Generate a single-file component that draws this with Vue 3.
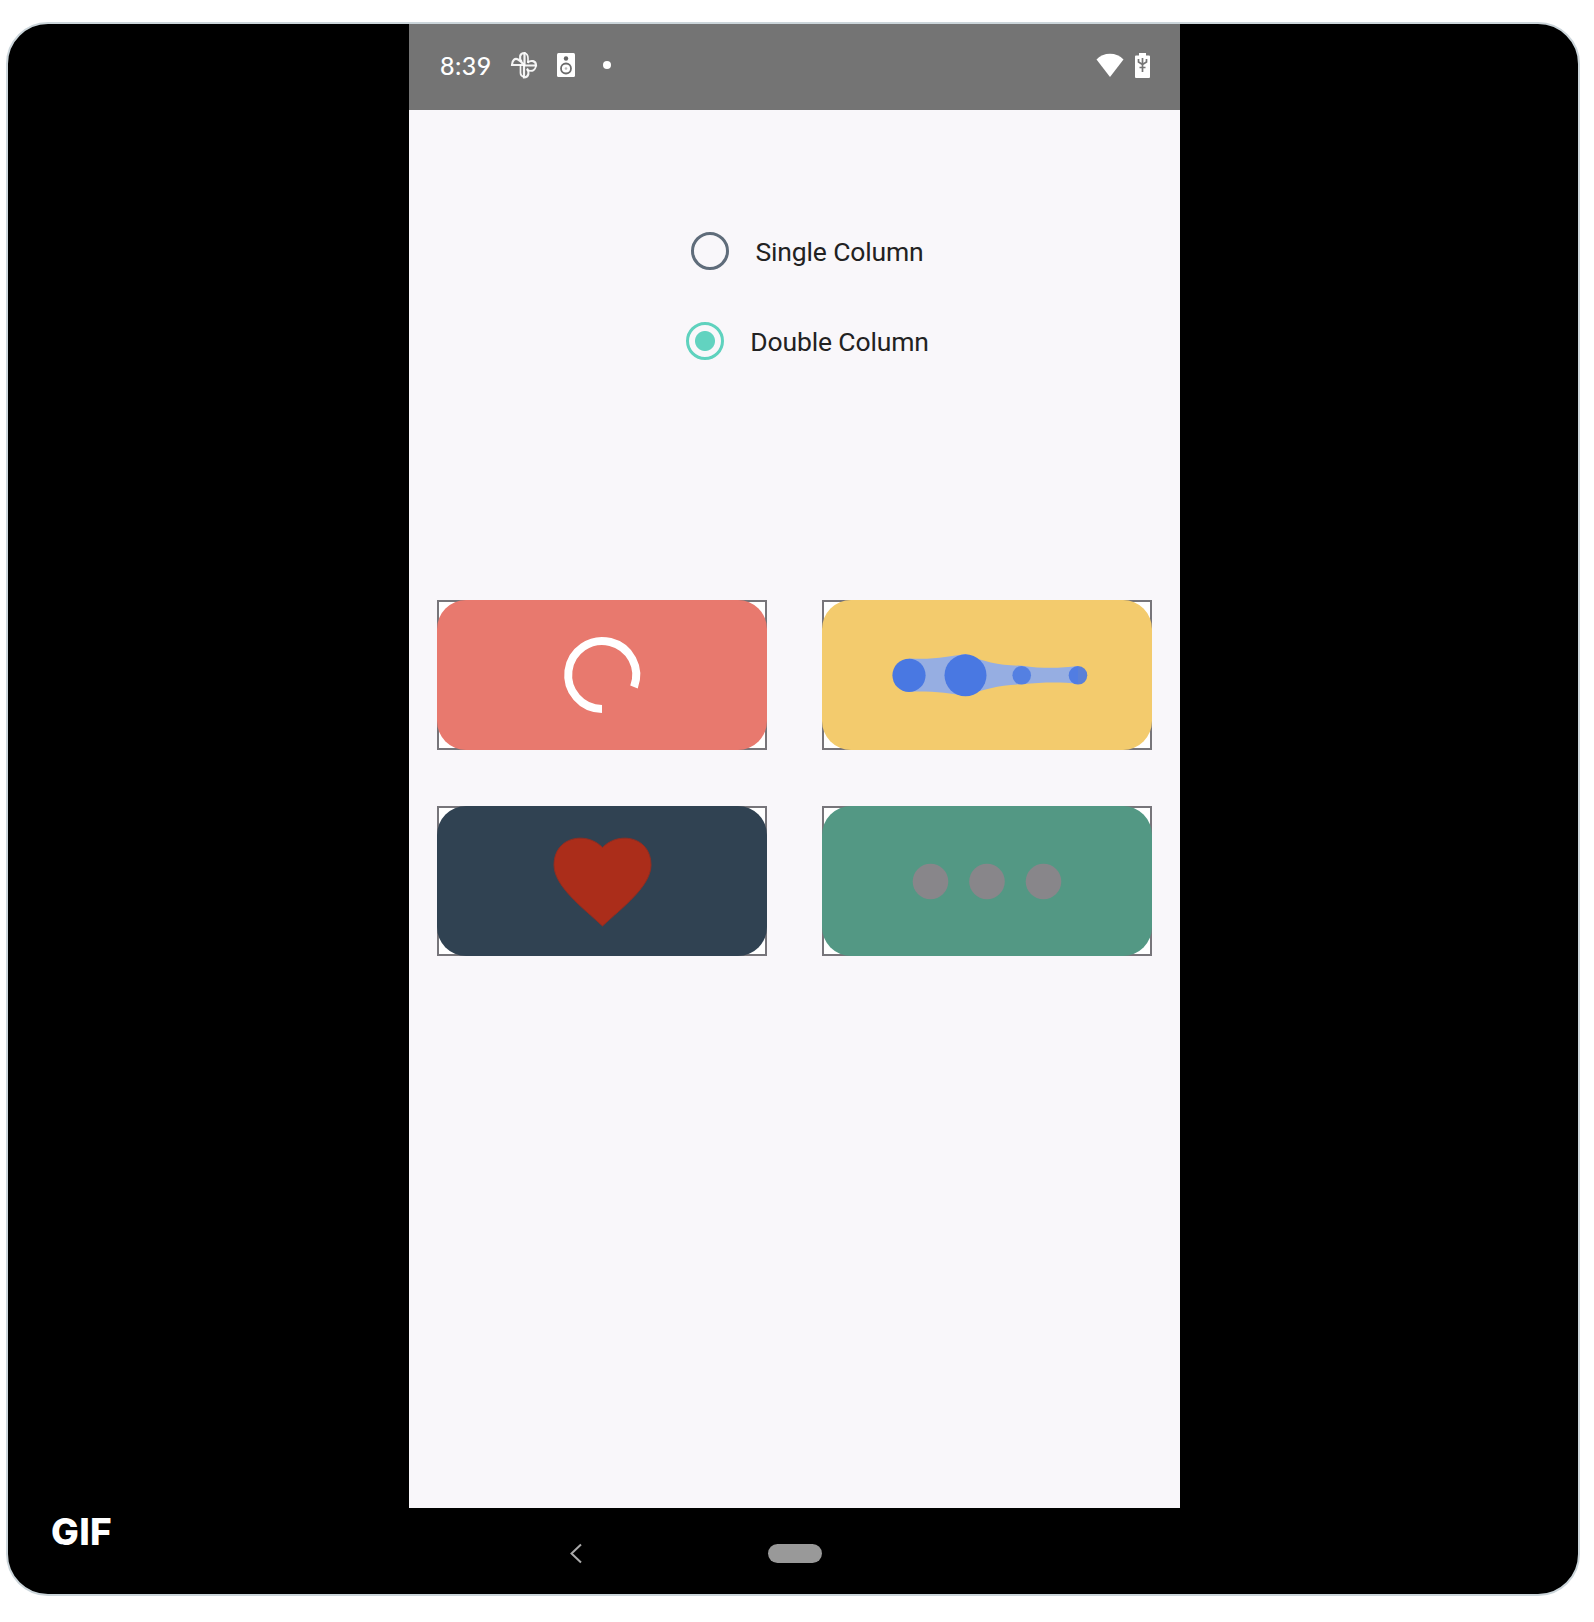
<script setup>
const options = [
  { id: 'single', label: 'Single Column', checked: false },
  { id: 'double', label: 'Double Column', checked: true },
]
const chain = [
  { x: 87, r: 16.6, o: 1 },
  { x: 143.5, r: 21, o: 1 },
  { x: 199.7, r: 9.3, o: 0.85 },
  { x: 256, r: 9.3, o: 0.9 },
]
const dots = [108.5, 165, 221.5]
</script>

<template>
  <main class="media">
    <section class="phone">
      <header class="status">
        <span class="time">8:39</span>
        <svg class="pinwheel" width="28" height="28" viewBox="0 0 28 28">
          <g fill="none" stroke="#fff" stroke-opacity="0.92" stroke-width="2.2">
            <path d="M14.500 14V2C9.500 2 9 7 11.500 10.500" />
            <path d="M14 14.500H26C26 9.500 21 9 17.500 11.500" />
            <path d="M14 14V26.500C19 26.500 19.500 21 17 17.500" />
            <path d="M14 14H2C2 9 5 7 8 8.500Q11 10 14 14" />
            <path d="M10.500 14V22Q10.500 25 14 26M14.500 2Q18 3 18 7V12M17 19Q25 22 26 14.500" stroke-width="1.700" />
          </g>
        </svg>
        <svg class="speaker" width="18" height="24" viewBox="0 0 18 24">
          <rect width="18" height="24" rx="1.500" fill="#fff" />
          <circle cx="9" cy="5.500" r="2.200" fill="#666" />
          <circle cx="9" cy="15.500" r="5" fill="#fff" stroke="#6b6b6b" stroke-width="1.800" />
          <circle cx="9" cy="15.500" r="1.300" fill="#bbb" />
        </svg>
        <i class="more"></i>
        <svg class="wifi" width="28" height="24" viewBox="0 0 28 24">
          <path d="M0.500 6.500C7 -1.200 21 -1.200 27.500 6.500L14 24Z" fill="#fff" />
        </svg>
        <svg class="battery" width="15" height="25" viewBox="0 0 15 25">
          <path d="M0 3.500Q0 2.500 1 2.500H4V0H11V2.500H14Q15 2.500 15 3.500V24Q15 25 14 25H1Q0 25 0 24Z" fill="#fff" />
          <path d="M3.500 6V9L7.500 11.500L11.500 9V6M7.500 5V19M4.500 14.500H10.500" fill="none" stroke="#757575" stroke-width="1.700" />
        </svg>
      </header>

      <div class="screen">
        <div class="options">
          <label v-for="o in options" :key="o.id" class="option" :class="{ checked: o.checked }">
            <span class="radio"></span>
            <span class="label">{{ o.label }}</span>
          </label>
        </div>

        <div class="grid">
          <div class="tile">
            <div class="fill coral">
              <svg viewBox="0 0 330 150">
                <path d="M165 109A34 34 0 1 1 197 87" fill="none" stroke="#fff" stroke-width="8" />
              </svg>
            </div>
          </div>
          <div class="tile">
            <div class="fill yellow">
              <svg viewBox="0 0 330 150">
                <path
                  d="M87 58.400C112 60 128 56 143.500 54C162 62 178 65.700 200 65.700C222 69 240 68 256 66V84C240 82 222 82 200 84.300C178 85 162 89 143.500 96C128 93 112 91 87 91.600Z"
                  fill="#96aee2"
                />
                <circle v-for="c in chain" :key="c.x" :cx="c.x" cy="75.300" :r="c.r" :fill-opacity="c.o" fill="#4978e2" />
              </svg>
            </div>
          </div>
          <div class="tile">
            <div class="fill navy">
              <svg viewBox="0 0 330 150">
                <path
                  d="M165.500 41.500C150 25 117 30 117 59C117 80 145 101 165.500 120C186 101 214 80 214 59C214 30 181 25 165.500 41.500Z"
                  fill="#ab2d1a" stroke="#8f2d22" stroke-width="1"
                />
              </svg>
            </div>
          </div>
          <div class="tile">
            <div class="fill green">
              <svg viewBox="0 0 330 150">
                <circle v-for="x in dots" :key="x" :cx="x" cy="75.500" r="17.800" fill="#88868a" />
              </svg>
            </div>
          </div>
        </div>
      </div>

      <nav class="navbar">
        <svg class="back" width="14" height="22" viewBox="0 0 14 22">
          <path d="M12 2.500L2.500 11.500L12 20.500" fill="none" stroke="#aaa" stroke-width="2" />
        </svg>
        <span class="home"></span>
      </nav>
    </section>
    <span class="gif">GIF</span>
  </main>
</template>

<style>
body {
  margin: 0;
  background: #fff;
}
</style>

<style scoped>
.media {
  position: relative;
  box-sizing: border-box;
  width: 1574px;
  height: 1574px;
  margin: 22px 0 26px 6px;
  border: 2px solid #cbd5da;
  border-radius: 42px;
  background: #000;
  overflow: hidden;
  display: flex;
  font-family: Roboto, sans-serif;
}
.phone {
  width: 771px;
  height: 1570px;
  margin-left: 401px;
  display: flex;
  flex-direction: column;
}
.status {
  height: 86px;
  box-sizing: border-box;
  padding: 0 30px 4px 31px;
  background: #747474;
  display: flex;
  align-items: center;
  color: #fff;
}
.time {
  width: 70px;
  font: 500 25px/30px Lato, sans-serif;
  letter-spacing: 0.5px;
}
.speaker {
  margin-left: 19px;
}
.more {
  width: 8px;
  height: 8px;
  margin-left: 28px;
  border-radius: 50%;
  background: #fff;
}
.wifi {
  margin-left: auto;
}
.battery {
  margin-left: 11px;
}
.screen {
  flex: none;
  height: 1398px;
  background: #f9f7fa;
}
.options {
  height: 490px;
  box-sizing: border-box;
  padding-top: 119px;
  display: flex;
  flex-direction: column;
  align-items: center;
  gap: 46px;
}
.option {
  height: 44px;
  display: flex;
  align-items: center;
  gap: 26px;
  padding-left: 26px;
}
.radio {
  box-sizing: border-box;
  width: 38px;
  height: 38px;
  border: 3px solid #5f6c7a;
  border-radius: 50%;
}
.checked .radio {
  border-width: 3.5px;
  border-color: #5fd2be;
  background: radial-gradient(circle, #62d3c0 9.5px, transparent 10.5px);
}
.label {
  font-size: 26.5px;
  line-height: 34px;
  letter-spacing: -0.14px;
  color: #222;
  padding-top: 2px;
}
.grid {
  display: grid;
  grid-template-columns: 330px 330px;
  grid-auto-rows: 150px;
  gap: 56px 55px;
  padding: 0 28px;
}
.tile {
  box-shadow: inset 0 0 0 2px #77757a;
  background: #fff;
}
.fill {
  height: 150px;
  border-radius: 29px;
  overflow: hidden;
}
.fill svg {
  display: block;
  width: 330px;
  height: 150px;
}
.coral {
  background: #e8796e;
}
.yellow {
  background: #f3cb6d;
}
.navy {
  background: #304252;
}
.green {
  background: #539884;
}
.navbar {
  height: 86px;
  display: flex;
  align-items: center;
  padding-top: 4px;
  box-sizing: border-box;
}
.back {
  margin-left: 160px;
}
.home {
  width: 54px;
  height: 19px;
  margin-left: 185px;
  border-radius: 10px;
  background: #999;
}
.gif {
  position: absolute;
  left: 43px;
  bottom: 40px;
  font: 800 37px/44px Inter, sans-serif;
  letter-spacing: 0.3px;
  color: #fff;
}
</style>
